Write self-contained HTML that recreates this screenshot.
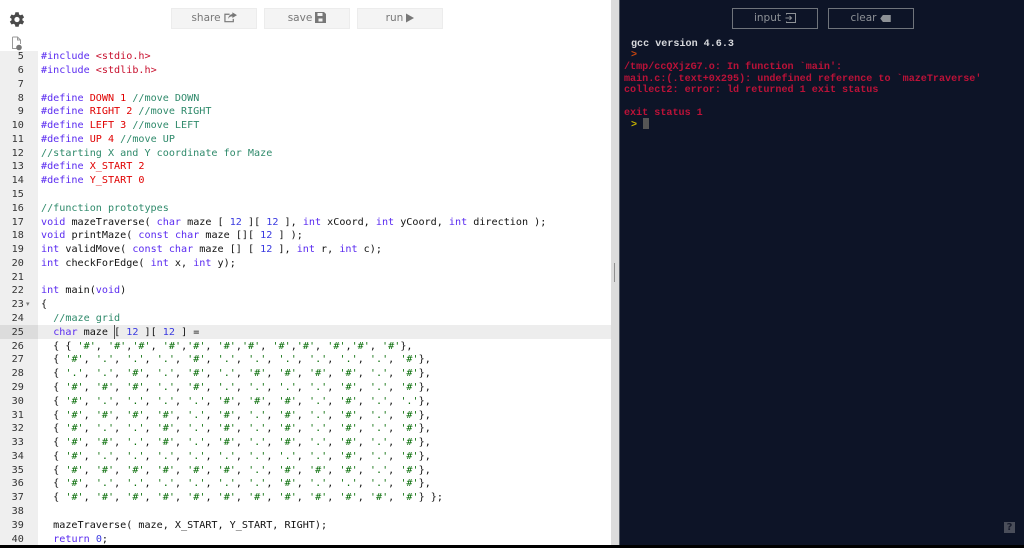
<!DOCTYPE html>
<html><head><meta charset="utf-8"><style>
html,body{margin:0;padding:0;width:1024px;height:548px;overflow:hidden;background:#000}
#wrap{position:relative;width:1024px;height:548px;overflow:hidden}
.a{position:absolute}
#ed{left:0;top:0;width:611px;height:545px;background:#fff;overflow:hidden}
#gut{left:0;top:51px;width:38px;height:494px;background:#efefef}
#act{left:38px;top:325px;width:573px;height:14px;background:#ededed}
#gact{left:0;top:325px;width:38px;height:14px;background:#dcdcdc}
pre{margin:0;font-family:"DejaVu Sans Mono","Liberation Mono",monospace;font-size:10.12px;line-height:13.785px;color:#111}
#nums{left:0;top:50.2px;width:23.8px;text-align:right;color:#333;height:495px;overflow:hidden}
#code{left:41px;top:50.2px;height:495px;overflow:hidden}
i{font-style:normal}
.p{color:#5a2bf0}.k{color:#5a2bf0}.s{color:#c8102e}.d{color:#e00000}.c{color:#2f8a6b}.n{color:#3a3ae0}.g{color:#0a6e0a}
.btn{top:8px;height:19px;width:84px;background:#f4f4f4;border:1px solid #ececec;font:10.5px/19px "DejaVu Sans","Liberation Sans",sans-serif;color:#777;text-align:center}
.btn svg{vertical-align:-2px;margin-left:3px}
#split{left:611px;top:0;width:8px;height:545px;background:#dcdcdc}
#term{left:619px;top:0;width:405px;height:545px;background:#0d1427;border-left:1px solid #555b66;box-sizing:border-box}
.db{top:8px;height:19px;width:84px;border:1px solid #6f747b;font:10.5px/18px "DejaVu Sans","Liberation Sans",sans-serif;color:#8d9196;text-align:center}
.db svg{vertical-align:-2px;margin-left:4px}
.t{font-family:"Liberation Mono",monospace;font-weight:bold;font-size:10.1px;line-height:11.6px;white-space:pre;left:624px}
</style></head><body><div id="wrap">
<div class="a" id="ed"></div>
<svg class="a" style="left:6.500px;top:9.500px" width="19" height="19" viewBox="0 0 24 24"><path fill="#4a4a4a" d="M19.400 13a7.600 7.600 0 0 0 0-2l2.200-1.700-2.100-3.600-2.600 1a7.600 7.600 0 0 0-1.700-1L14.800 2.900h-4.200L10 5.700a7.600 7.600 0 0 0-1.700 1l-2.600-1-2.100 3.600L5.800 11a7.600 7.600 0 0 0 0 2l-2.200 1.700 2.100 3.600 2.600-1a7.600 7.600 0 0 0 1.700 1l.6 2.800h4.200l.4-2.800a7.600 7.600 0 0 0 1.700-1l2.600 1 2.100-3.600zM12.600 15.300a3.300 3.300 0 1 1 0-6.600 3.300 3.300 0 0 1 0 6.600z"/></svg>
<svg class="a" style="left:11px;top:36px" width="12" height="15" viewBox="0 0 12 15"><path fill="none" stroke="#999" stroke-width="1" d="M1.500 1h5l3 3v4M1.500 1v11.500h5M6.500 1v3h3"/><circle cx="8" cy="11.500" r="2.800" fill="#777"/></svg>
<div class="a" id="gut"></div><div class="a" id="act"></div><div class="a" id="gact"></div>
<div class="a" style="left:114px;top:325px;width:1px;height:14px;background:#555"></div>
<div class="a btn" style="left:171px">share<svg width="13" height="11" viewBox="0 0 14 11"><path fill="none" stroke="#777" stroke-width="1.300" d="M6 2H1v8h9V7"/><path fill="#777" d="M9 0l5 3-5 3V4.300C7 4.300 5.500 5 4.500 7 4.700 4 6.500 2 9 1.800z"/></svg></div>
<div class="a btn" style="left:264px">save<svg width="11" height="11" viewBox="0 0 11 11"><path fill="#777" d="M0 0h9l2 2v9H0zM2.500 1v3h5V1zM3.500 6.500v3h4v-3z"/></svg></div>
<div class="a btn" style="left:357px">run<svg width="8" height="10" viewBox="0 0 9 10"><path fill="#777" d="M0 0l9 5-9 5z"/></svg></div>
<pre class="a" id="nums">5
6
7
8
9
10
11
12
13
14
15
16
17
18
19
20
21
22
23
24
25
26
27
28
29
30
31
32
33
34
35
36
37
38
39
40</pre>
<div class="a" style="left:26px;top:301px;font:7px/7px 'DejaVu Sans',sans-serif;color:#777">&#9662;</div>
<pre class="a" id="code"><i class="p">#include</i> <i class="s">&lt;stdio.h&gt;</i>
<i class="p">#include</i> <i class="s">&lt;stdlib.h&gt;</i>

<i class="p">#define</i> <i class="d">DOWN 1</i> <i class="c">//move DOWN</i>
<i class="p">#define</i> <i class="d">RIGHT 2</i> <i class="c">//move RIGHT</i>
<i class="p">#define</i> <i class="d">LEFT 3</i> <i class="c">//move LEFT</i>
<i class="p">#define</i> <i class="d">UP 4</i> <i class="c">//move UP</i>
<i class="c">//starting X and Y coordinate for Maze</i>
<i class="p">#define</i> <i class="d">X_START 2</i>
<i class="p">#define</i> <i class="d">Y_START 0</i>

<i class="c">//function prototypes</i>
<i class="k">void</i> mazeTraverse( <i class="k">char</i> maze [ <i class="n">12</i> ][ <i class="n">12</i> ], <i class="k">int</i> xCoord, <i class="k">int</i> yCoord, <i class="k">int</i> direction );
<i class="k">void</i> printMaze( <i class="k">const</i> <i class="k">char</i> maze [][ <i class="n">12</i> ] );
<i class="k">int</i> validMove( <i class="k">const</i> <i class="k">char</i> maze [] [ <i class="n">12</i> ], <i class="k">int</i> r, <i class="k">int</i> c);
<i class="k">int</i> checkForEdge( <i class="k">int</i> x, <i class="k">int</i> y);

<i class="k">int</i> main(<i class="k">void</i>)
{
  <i class="c">//maze grid</i>
  <i class="k">char</i> maze [ <i class="n">12</i> ][ <i class="n">12</i> ] =
  { { <i class="g">'#'</i>, <i class="g">'#'</i>,<i class="g">'#'</i>, <i class="g">'#'</i>,<i class="g">'#'</i>, <i class="g">'#'</i>,<i class="g">'#'</i>, <i class="g">'#'</i>,<i class="g">'#'</i>, <i class="g">'#'</i>,<i class="g">'#'</i>, <i class="g">'#'</i>},
  { <i class="g">'#'</i>, <i class="g">'.'</i>, <i class="g">'.'</i>, <i class="g">'.'</i>, <i class="g">'#'</i>, <i class="g">'.'</i>, <i class="g">'.'</i>, <i class="g">'.'</i>, <i class="g">'.'</i>, <i class="g">'.'</i>, <i class="g">'.'</i>, <i class="g">'#'</i>},
  { <i class="g">'.'</i>, <i class="g">'.'</i>, <i class="g">'#'</i>, <i class="g">'.'</i>, <i class="g">'#'</i>, <i class="g">'.'</i>, <i class="g">'#'</i>, <i class="g">'#'</i>, <i class="g">'#'</i>, <i class="g">'#'</i>, <i class="g">'.'</i>, <i class="g">'#'</i>},
  { <i class="g">'#'</i>, <i class="g">'#'</i>, <i class="g">'#'</i>, <i class="g">'.'</i>, <i class="g">'#'</i>, <i class="g">'.'</i>, <i class="g">'.'</i>, <i class="g">'.'</i>, <i class="g">'.'</i>, <i class="g">'#'</i>, <i class="g">'.'</i>, <i class="g">'#'</i>},
  { <i class="g">'#'</i>, <i class="g">'.'</i>, <i class="g">'.'</i>, <i class="g">'.'</i>, <i class="g">'.'</i>, <i class="g">'#'</i>, <i class="g">'#'</i>, <i class="g">'#'</i>, <i class="g">'.'</i>, <i class="g">'#'</i>, <i class="g">'.'</i>, <i class="g">'.'</i>},
  { <i class="g">'#'</i>, <i class="g">'#'</i>, <i class="g">'#'</i>, <i class="g">'#'</i>, <i class="g">'.'</i>, <i class="g">'#'</i>, <i class="g">'.'</i>, <i class="g">'#'</i>, <i class="g">'.'</i>, <i class="g">'#'</i>, <i class="g">'.'</i>, <i class="g">'#'</i>},
  { <i class="g">'#'</i>, <i class="g">'.'</i>, <i class="g">'.'</i>, <i class="g">'#'</i>, <i class="g">'.'</i>, <i class="g">'#'</i>, <i class="g">'.'</i>, <i class="g">'#'</i>, <i class="g">'.'</i>, <i class="g">'#'</i>, <i class="g">'.'</i>, <i class="g">'#'</i>},
  { <i class="g">'#'</i>, <i class="g">'#'</i>, <i class="g">'.'</i>, <i class="g">'#'</i>, <i class="g">'.'</i>, <i class="g">'#'</i>, <i class="g">'.'</i>, <i class="g">'#'</i>, <i class="g">'.'</i>, <i class="g">'#'</i>, <i class="g">'.'</i>, <i class="g">'#'</i>},
  { <i class="g">'#'</i>, <i class="g">'.'</i>, <i class="g">'.'</i>, <i class="g">'.'</i>, <i class="g">'.'</i>, <i class="g">'.'</i>, <i class="g">'.'</i>, <i class="g">'.'</i>, <i class="g">'.'</i>, <i class="g">'#'</i>, <i class="g">'.'</i>, <i class="g">'#'</i>},
  { <i class="g">'#'</i>, <i class="g">'#'</i>, <i class="g">'#'</i>, <i class="g">'#'</i>, <i class="g">'#'</i>, <i class="g">'#'</i>, <i class="g">'.'</i>, <i class="g">'#'</i>, <i class="g">'#'</i>, <i class="g">'#'</i>, <i class="g">'.'</i>, <i class="g">'#'</i>},
  { <i class="g">'#'</i>, <i class="g">'.'</i>, <i class="g">'.'</i>, <i class="g">'.'</i>, <i class="g">'.'</i>, <i class="g">'.'</i>, <i class="g">'.'</i>, <i class="g">'#'</i>, <i class="g">'.'</i>, <i class="g">'.'</i>, <i class="g">'.'</i>, <i class="g">'#'</i>},
  { <i class="g">'#'</i>, <i class="g">'#'</i>, <i class="g">'#'</i>, <i class="g">'#'</i>, <i class="g">'#'</i>, <i class="g">'#'</i>, <i class="g">'#'</i>, <i class="g">'#'</i>, <i class="g">'#'</i>, <i class="g">'#'</i>, <i class="g">'#'</i>, <i class="g">'#'</i>} };

  mazeTraverse( maze, X_START, Y_START, RIGHT);
  <i class="k">return</i> <i class="n">0</i>;</pre>
<div class="a" id="split"></div>
<div class="a" style="left:614px;top:263px;width:1px;height:19px;background:#8f8f8f"></div>
<div class="a" id="term"></div>
<div class="a db" style="left:732px">input<svg width="11" height="10" viewBox="0 0 11 10"><path fill="none" stroke="#8d9196" d="M1.500 1.500V.5h9v9h-9V8.500M.5 5h6M4.500 3l2 2-2 2"/></svg></div>
<div class="a db" style="left:828px">clear<svg width="11" height="7" viewBox="0 0 12 8" style="vertical-align:-1px"><path fill="#8d9196" d="M3 0h9v8H3L0 4z"/></svg></div>
<div class="a t" style="left:631px;top:39px;color:#d8dade">gcc version 4.6.3</div>
<div class="a t" style="left:631px;top:50px;color:#c8450f">&gt;</div>
<div class="a t" style="top:62px;color:#bb1238">/tmp/ccQXjzG7.o: In function `main':
main.c:(.text+0x295): undefined reference to `mazeTraverse'
collect2: error: ld returned 1 exit status

exit status 1</div>
<div class="a t" style="left:631px;top:120px;color:#c8b400">&gt;</div>
<div class="a" style="left:643px;top:118px;width:6px;height:11px;background:#555"></div>
<div class="a" style="left:1004px;top:522px;width:11px;height:11px;background:#4a4e5a;color:#171c2c;font:bold 10px/11px 'DejaVu Sans',sans-serif;text-align:center">?</div>
</div></body></html>
